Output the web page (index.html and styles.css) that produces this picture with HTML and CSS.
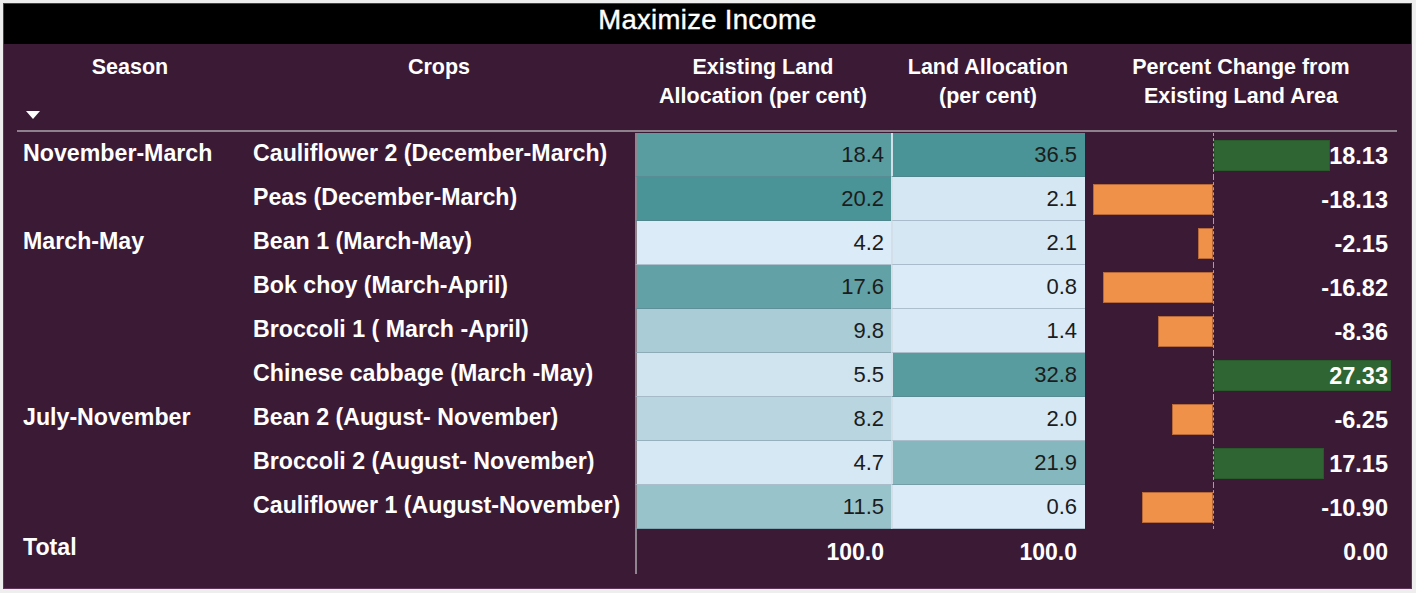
FILE: index.html
```html
<!DOCTYPE html>
<html lang="en">
<head>
<meta charset="utf-8">
<title>Maximize Income</title>
<link rel="stylesheet" href="styles.css">
</head>
<body>
<div class="frame">
  <div class="title">Maximize Income</div>
  <div class="table">
    <div class="hcell season-h"><span>Season</span><span class="sort"></span></div>
    <div class="hcell">Crops</div>
    <div class="hcell">Existing Land<br>Allocation (per cent)</div>
    <div class="hcell">Land Allocation<br>(per cent)</div>
    <div class="hcell">Percent Change from<br>Existing Land Area</div>
    <div class="hline"></div>

    <div class="season">November-March</div>
    <div class="crop">Cauliflower 2 (December-March)</div>
    <div class="num ex" style="background:rgb(90,157,161)">18.4</div>
    <div class="num la" style="background:rgb(74,147,150)">36.5</div>
    <div class="pct"><div class="neg"></div><div class="axis"></div><div class="pos"><div class="bar up" style="width:116px"></div></div><span class="val">18.13</span></div>

    <div class="season"></div>
    <div class="crop">Peas (December-March)</div>
    <div class="num ex" style="background:rgb(74,147,150)">20.2</div>
    <div class="num la" style="background:rgb(214,231,244)">2.1</div>
    <div class="pct"><div class="neg"><div class="bar down" style="width:120px"></div></div><div class="axis"></div><div class="pos"></div><span class="val">-18.13</span></div>

    <div class="season">March-May</div>
    <div class="crop">Bean 1 (March-May)</div>
    <div class="num ex" style="background:rgb(220,235,248)">4.2</div>
    <div class="num la" style="background:rgb(214,231,244)">2.1</div>
    <div class="pct"><div class="neg"><div class="bar down" style="width:15px"></div></div><div class="axis"></div><div class="pos"></div><span class="val">-2.15</span></div>

    <div class="season"></div>
    <div class="crop">Bok choy (March-April)</div>
    <div class="num ex" style="background:rgb(98,161,166)">17.6</div>
    <div class="num la" style="background:rgb(219,235,247)">0.8</div>
    <div class="pct"><div class="neg"><div class="bar down" style="width:110px"></div></div><div class="axis"></div><div class="pos"></div><span class="val">-16.82</span></div>

    <div class="season"></div>
    <div class="crop">Broccoli 1 ( March -April)</div>
    <div class="num ex" style="background:rgb(169,204,214)">9.8</div>
    <div class="num la" style="background:rgb(217,233,246)">1.4</div>
    <div class="pct"><div class="neg"><div class="bar down" style="width:55px"></div></div><div class="axis"></div><div class="pos"></div><span class="val">-8.36</span></div>

    <div class="season"></div>
    <div class="crop">Chinese cabbage (March -May)</div>
    <div class="num ex" style="background:rgb(208,228,240)">5.5</div>
    <div class="num la" style="background:rgb(89,156,160)">32.8</div>
    <div class="pct"><div class="neg"></div><div class="axis"></div><div class="pos"><div class="bar up" style="width:177px"></div></div><span class="val">27.33</span></div>

    <div class="season">July-November</div>
    <div class="crop">Bean 2 (August- November)</div>
    <div class="num ex" style="background:rgb(184,213,224)">8.2</div>
    <div class="num la" style="background:rgb(214,232,244)">2.0</div>
    <div class="pct"><div class="neg"><div class="bar down" style="width:41px"></div></div><div class="axis"></div><div class="pos"></div><span class="val">-6.25</span></div>

    <div class="season"></div>
    <div class="crop">Broccoli 2 (August- November)</div>
    <div class="num ex" style="background:rgb(215,232,245)">4.7</div>
    <div class="num la" style="background:rgb(133,183,190)">21.9</div>
    <div class="pct"><div class="neg"></div><div class="axis"></div><div class="pos"><div class="bar up" style="width:110px"></div></div><span class="val">17.15</span></div>

    <div class="season"></div>
    <div class="crop">Cauliflower 1 (August-November)</div>
    <div class="num ex" style="background:rgb(153,195,203)">11.5</div>
    <div class="num la" style="background:rgb(220,235,248)">0.6</div>
    <div class="pct"><div class="neg"><div class="bar down" style="width:71px"></div></div><div class="axis"></div><div class="pos"></div><span class="val">-10.90</span></div>

    <div class="season total-label">Total</div>
    <div class="crop total"></div>
    <div class="tnum ex-t">100.0</div>
    <div class="tnum">100.0</div>
    <div class="tnum pct-t">0.00</div>
  </div>
</div>
</body>
</html>
```

FILE: styles.css
```css
* { box-sizing: border-box; }
html, body { margin: 0; padding: 0; }
body {
  background: #eeeeee;
  width: 1416px;
  height: 593px;
  overflow: hidden;
  font-family: "Liberation Sans", Arial, sans-serif;
}
.frame {
  margin: 3px 4px 4px 3px;
  height: 586px;
  border: 1px solid #5c3558;
  background: #3b1a36;
  color: #ffffff;
}
.title {
  background: #000000;
  height: 40px;
  text-align: center;
  font-size: 27.5px;
  line-height: 32px;
  letter-spacing: 0.3px;
  -webkit-text-stroke: 0.4px #ffffff;
}
.table {
  display: grid;
  grid-template-columns: 226px 392px 256px 194px 312px;
  grid-template-rows: 86px 3px;
  grid-auto-rows: 44px;
  margin-left: 13px;
}
.hcell {
  padding-top: 9px;
  text-align: center;
  font-weight: bold;
  font-size: 21.5px;
  line-height: 29px;
}
.season-h {
  display: flex;
  flex-direction: column;
  align-items: center;
}
.sort {
  align-self: flex-start;
  margin: 29px 0 0 9px;
  width: 0;
  height: 0;
  border-left: 7px solid transparent;
  border-right: 7px solid transparent;
  border-top: 8px solid #ffffff;
}
.hline {
  grid-column: 1 / -1;
  border-top: 2px solid #8e808c;
}
.season, .crop {
  display: flex;
  align-items: center;
  font-weight: bold;
  font-size: 23.2px;
  padding-bottom: 4px;
  white-space: nowrap;
}
.season { padding-left: 6px; }
.crop { padding-left: 10px; }
.num {
  display: flex;
  align-items: center;
  justify-content: flex-end;
  font-size: 22px;
  color: #1c1c1c;
  border-bottom: 1px solid rgba(90, 110, 125, 0.35);
}
.ex {
  border-left: 2px solid #8e858f;
  padding-right: 7px;
}
.la {
  border-left: 2px solid #d3dfe8;
  padding-right: 8px;
}
.pct {
  position: relative;
  display: flex;
  align-items: center;
}
.neg {
  width: 128px;
  display: flex;
  justify-content: flex-end;
}
.axis {
  align-self: stretch;
  width: 0;
  border-left: 1px dashed #a89ca6;
}
.pos {
  flex: 1;
  display: flex;
}
.bar {
  height: 31px;
}
.up {
  background: #2f6532;
  border: 1px solid #295a2c;
}
.down {
  background: #f0914a;
  border: 1px solid #b8693a;
}
.val {
  position: absolute;
  right: 9px;
  top: 0;
  bottom: 0;
  display: flex;
  align-items: center;
  font-weight: bold;
  font-size: 23.5px;
  padding-top: 2px;
}
.total-label {
  height: 45px;
  padding-bottom: 8px;
}
.tnum {
  height: 45px;
  display: flex;
  align-items: center;
  justify-content: flex-end;
  font-weight: bold;
  font-size: 23px;
  padding-right: 8px;
  padding-top: 2px;
}
.ex-t {
  border-left: 2px solid #8e858f;
  padding-right: 7px;
}
.pct-t { padding-right: 9px; }
```
